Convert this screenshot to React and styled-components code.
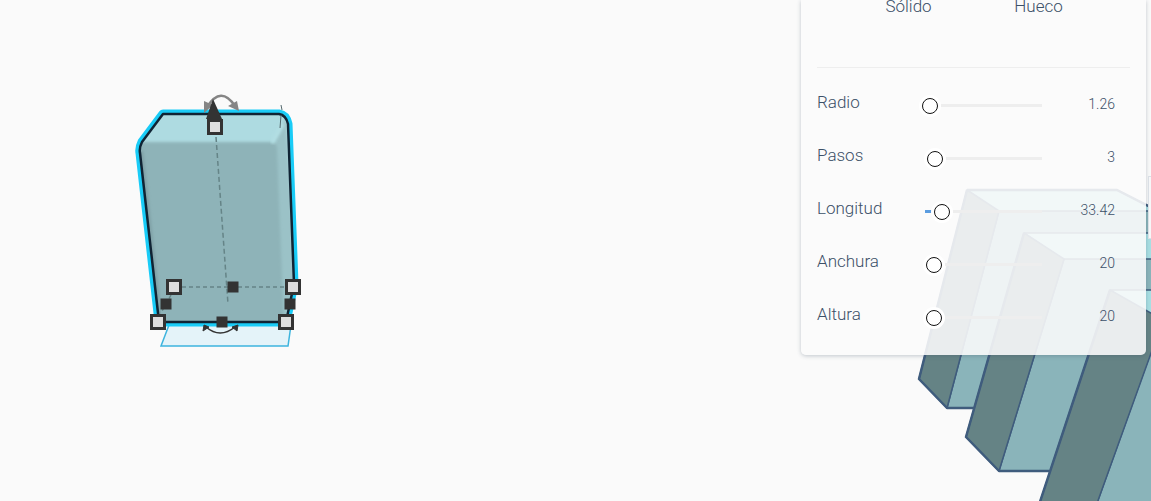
import React, { useState } from 'react';
import styled, { createGlobalStyle } from 'styled-components';

const GlobalStyle = createGlobalStyle`
  * {
    box-sizing: border-box;
  }

  body {
    margin: 0;
    background-color: #fafafa;
    color: #3c5068;
    font-family: Roboto, "Liberation Sans", sans-serif;
    font-weight: 300;
  }
`;

const Workplane = styled.main`
  position: relative;
  display: flex;
  justify-content: flex-end;
  align-items: flex-start;
  min-height: 100vh;
  padding-right: 5px;
  overflow: hidden;
`;

// objects placed on the workplane, below the inspector
const SelectedObject = styled.svg`
  position: absolute;
  left: 130px;
  top: 90px;
  width: 180px;
  height: 260px;
`;

const BlockGroup = styled.svg`
  position: absolute;
  right: 0;
  top: 185px;
  width: 236px;
  height: 316px;
`;

const Inspector = styled.section`
  position: relative;
  width: 345px;
  padding: 0 16px 12px;
  border-radius: 0 0 5px 5px;
  background-color: rgba(250, 250, 250, 0.89);
  box-shadow: 0 1px 4px rgba(60, 80, 100, 0.3);
`;

const Modes = styled.div`
  display: flex;
  justify-content: center;
  height: 68px;
  border-bottom: 1px solid #eee;
`;

const ModeButton = styled.button`
  width: 130px;
  height: 12px;
  padding: 0;
  border: 0;
  background: none;
  color: inherit;
  font: inherit;
  font-size: 17px;
  line-height: 12px;
`;

const Rows = styled.div`
  padding-top: 10px;
`;

const Row = styled.div`
  display: grid;
  grid-template-columns: 105px 120px 1fr;
  align-items: center;
  height: 53px;
  padding-right: 15px;

  label {
    padding-bottom: 6px;
    font-size: 17px;
    line-height: 20px;
  }

  output {
    padding-bottom: 2px;
    font-size: 14px;
    line-height: 20px;
    text-align: right;
  }
`;

const Range = styled.input`
  appearance: none;
  width: 120px;
  height: 18px;
  margin: 2px 0 0;
  background: none;

  &::-webkit-slider-runnable-track {
    height: 3px;
    background:
      linear-gradient(#5a9ce0, #5a9ce0) 3px 0 / var(--fill) 100% no-repeat,
      linear-gradient(#eee, #eee) 3px 0 / 100% 100% no-repeat;
  }

  &::-webkit-slider-thumb {
    appearance: none;
    width: 16px;
    height: 16px;
    margin-top: -6px;
    border: 1px solid #111;
    border-radius: 50%;
    background-color: #fff;
    box-shadow: 0 0 0 3px #fff;
  }
`;

const PanelToggle = styled.button`
  position: absolute;
  right: 0;
  top: 176px;
  width: 3px;
  height: 63px;
  padding: 0;
  border: 1px solid #dadfe5;
  border-right: 0;
  background-color: #f6f7f8;
`;

const properties = [
  { id: 'radio', label: 'Radio', value: 1.26, min: 1.26, max: 20, step: 0.01 },
  { id: 'pasos', label: 'Pasos', value: 3, min: 1, max: 41, step: 1 },
  { id: 'longitud', label: 'Longitud', value: 33.42, min: 1, max: 280, step: 0.01 },
  { id: 'anchura', label: 'Anchura', value: 20, min: 12, max: 200, step: 0.01 },
  { id: 'altura', label: 'Altura', value: 20, min: 12, max: 200, step: 0.01 },
];

const PropertyRow = ({ property }) => {
  const { id, label, min, max, step } = property;
  const [value, setValue] = useState(property.value);
  const fill = ((value - min) / (max - min)) * 100;

  return (
    <Row>
      <label htmlFor={id}>{label}</label>
      <Range
        id={id}
        type="range"
        min={min}
        max={max}
        step={step}
        value={value}
        style={{ '--fill': `${fill}%` }}
        onChange={e => setValue(Number(e.target.value))}
      />
      <output htmlFor={id}>{value}</output>
    </Row>
  );
};

const corners = [[215, 127], [174, 287], [293, 287], [158, 322], [286, 322]];
const edges = [[233, 287], [166, 304], [290, 304], [222, 322]];
const outline = 'M163 114 H279 Q286 115 288 124 L294 284 L286 322 H159 L140 153 Q139 148 142 142 Z';

const SelectedShape = () => (
  <SelectedObject viewBox="130 90 180 260" aria-hidden="true">
    <defs>
      <filter id="soft" x="-10%" y="-10%" width="120%" height="120%">
        <feGaussianBlur stdDeviation="1.5" />
      </filter>
      <clipPath id="body"><path d={outline} /></clipPath>
    </defs>
    <path d="M169 325 L161 346 H288 L291 325" fill="#e4f3f9" stroke="#3db4de" strokeWidth="1.5" />
    <path d={outline} fill="none" stroke="#19ccf7" strokeWidth="9" strokeLinejoin="round" />
    <path d={outline} fill="#aedbe1" />
    <g clipPath="url(#body)">
      <path d="M273 142 L286 118 L300 330 H270 Z" fill="#9bc2c7" filter="url(#soft)" />
      <path d="M136 142 H271 Q277 142 277 149 L284 330 H145 Z" fill="#8eb3b8" filter="url(#soft)" />
      <path d="M272 143 L283 124" stroke="#b4e0e5" strokeWidth="4" filter="url(#soft)" />
      <path d="M139 151 L159 330" stroke="#7e9fa4" strokeWidth="8" filter="url(#soft)" />
      <path d="M158 320 H288" stroke="#789b9f" strokeWidth="3" filter="url(#soft)" />
    </g>
    <path d={outline} fill="none" stroke="#102434" strokeWidth="2.5" strokeLinejoin="round" />
    <path d="M281 105 L282 110 M281 115 L280 128" stroke="#53686d" strokeWidth="1" />
    <path d="M216 137 L228 304" stroke="#658487" strokeWidth="1.5" strokeDasharray="5 3" />
    <path d="M182 287 H285 M171 295 L161 313" stroke="#658487" strokeWidth="1.5" strokeDasharray="4 3" />
    <path d="M207 107 Q221 85 235 106" fill="none" stroke="#858585" strokeWidth="2.5" />
    <path d="M204 101 V113 L213 105 Z M239 111 L228 106 L237 101 Z" fill="#858585" />
    <path d="M206 327 Q220 339 235 327" fill="none" stroke="#333" strokeWidth="1.5" />
    <path d="M203 331 L204 325 L209 327 Z M232 327 L238 325 L237 331 Z" fill="#333" stroke="#333" strokeWidth="1" />
    <path d="M213 99 L222 119 H206 Z" fill="#333" />
    {corners.map(([x, y]) => (
      <rect key={`${x}-${y}`} x={x - 6.5} y={y - 6.5} width="13" height="13" fill="#dedede" stroke="#333" strokeWidth="3" />
    ))}
    {edges.map(([x, y]) => (
      <rect key={`${x}-${y}`} x={x - 5.5} y={y - 5.5} width="11" height="11" fill="#333" />
    ))}
  </SelectedObject>
);

const Blocks = () => (
  <BlockGroup viewBox="915 185 236 316" aria-hidden="true">
    <g stroke="#3f5c7d" strokeWidth="1.5" strokeLinejoin="round">
      <path d="M967 190 H1117 L1160 212 H999 Z" fill="#a8dfe3" />
      <path d="M999 211 H1160 V408 H947 Z" fill="#8ab4ba" />
      <path d="M967 190 L999 211 L947 408 L919 379 Z" fill="#658385" />
      <path d="M1024 233 H1160 V260 H1064 Z" fill="#a8dfe3" />
      <path d="M1064 259 H1160 V471 H999 Z" fill="#8ab4ba" />
      <path d="M1024 233 L1064 259 L999 471 L966 437 Z" fill="#658385" />
      <path d="M1110 290 H1170 V330 Z" fill="#a8dfe3" />
      <path d="M1163 318 H1180 V520 H1091 Z" fill="#8ab4ba" />
      <path d="M1110 290 L1163 320 L1091 520 H1034 Z" fill="#658385" />
    </g>
    <path
      d="M967 190 H1117 L1160 212 M967 190 L919 379 L947 408 H974 M1024 233 L966 437 L999 471 H1049 M1110 290 L1034 520"
      fill="none"
      stroke="#3f5c7d"
      strokeWidth="2.5"
      strokeLinejoin="round"
    />
  </BlockGroup>
);

const App = () => (
  <>
    <GlobalStyle />
    <Workplane>
      <SelectedShape />
      <Blocks />
      <Inspector>
        <Modes>
          <ModeButton type="button">Sólido</ModeButton>
          <ModeButton type="button">Hueco</ModeButton>
        </Modes>
        <Rows>
          {properties.map(property => <PropertyRow key={property.id} property={property} />)}
        </Rows>
      </Inspector>
      <PanelToggle type="button" aria-label="Contraer panel" />
    </Workplane>
  </>
);

export default App;
